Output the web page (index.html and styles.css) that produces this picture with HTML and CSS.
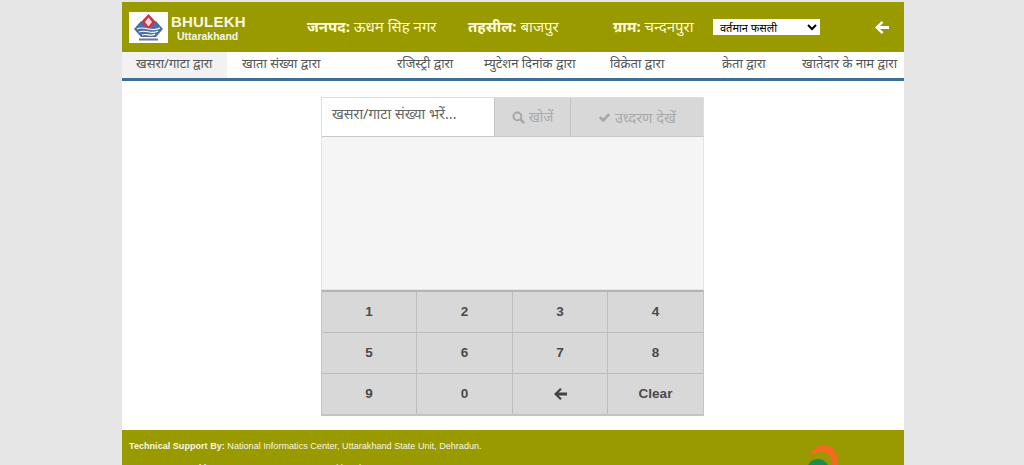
FILE: index.html
```html
<!DOCTYPE html>
<html lang="hi">
<head>
<meta charset="utf-8">
<title>Bhulekh Uttarakhand</title>
<link rel="stylesheet" href="styles.css">
</head>
<body>
<div class="page">
  <header class="header">
    <div class="logo-box">
      <svg class="logo-svg" viewBox="0 0 39 31" aria-hidden="true">
        <path d="M5 17 12 9 19.500 18 27 9 34 17 27 25H12Z" fill="#4a6fa8"/>
        <path d="M19.500 2 27 10 19.500 18 12 10Z" fill="#c8344a"/>
        <path d="M19.500 5.500 23 10 19.500 14.500 16 10Z" fill="#eed9dc"/>
        <path d="M8 17C15 13 22 21 31 16M10 20C16 17 23 23 29 19M13 23C18 21 22 25 26 22" fill="none" stroke="#fff" stroke-width="1.200"/>
        <rect x="10" y="26.500" width="19" height="2" fill="#777"/>
      </svg>
    </div>
    <div class="brand">
      <div class="brand-title">BHULEKH</div>
      <div class="brand-sub">Uttarakhand</div>
    </div>
    <div class="loc loc-district"><b>जनपद:</b> ऊधम सिह नगर</div>
    <div class="loc loc-tehsil"><b>तहसील:</b> बाजपुर</div>
    <div class="loc loc-village"><b>ग्राम:</b> चन्दनपुरा</div>
    <select class="season"><option>वर्तमान फसली</option></select>
    <svg class="back-icon" viewBox="0 0 14 14" aria-hidden="true"><path d="M7.200 1 8.800 2.600 5.600 5.600H14V8.400H5.600L8.800 11.400 7.200 13 1 7Z" fill="#fff"/></svg>
  </header>

  <nav class="tabs">
    <div class="tab tab-active">खसरा/गाटा द्वारा</div>
    <div class="tab tab-2">खाता संख्या द्वारा</div>
    <div class="tab tab-3">रजिस्ट्री द्वारा</div>
    <div class="tab tab-4">म्युटेशन दिनांक द्वारा</div>
    <div class="tab tab-5">विक्रेता द्वारा</div>
    <div class="tab tab-6">क्रेता द्वारा</div>
    <div class="tab tab-7">खातेदार के नाम द्वारा</div>
  </nav>

  <main class="content">
    <section class="panel">
      <div class="search-row">
        <div class="search-input">खसरा/गाटा संख्या भरें...</div>
        <div class="action action-search">
          <svg class="action-icon" viewBox="0 0 14 14" aria-hidden="true"><circle cx="5.800" cy="5.800" r="4.200" fill="none" stroke="#a8a8a8" stroke-width="2.200"/><path d="M8.800 8.800 13 13" stroke="#a8a8a8" stroke-width="2.600"/></svg>
          खोजें
        </div>
        <div class="action action-view">
          <svg class="action-icon" viewBox="0 0 14 14" aria-hidden="true"><path d="M1 7.500 3 5.500 5.500 8 11 2.500 13 4.500 5.500 12Z" fill="#a8a8a8"/></svg>
          उध्दरण देखें
        </div>
      </div>
      <div class="display"></div>
      <div class="keypad">
        <div class="key">1</div><div class="key">2</div><div class="key">3</div><div class="key">4</div>
        <div class="key">5</div><div class="key">6</div><div class="key">7</div><div class="key">8</div>
        <div class="key">9</div><div class="key">0</div>
        <div class="key"><svg class="key-icon" viewBox="0 0 14 14" aria-hidden="true"><path d="M7.200 1 8.800 2.600 5.600 5.600H14V8.400H5.600L8.800 11.400 7.200 13 1 7Z" fill="#444"/></svg></div>
        <div class="key">Clear</div>
      </div>
    </section>
  </main>

  <footer class="footer">
    <div class="footer-text">
      <p class="footer-line"><b>Technical Support By:</b> National Informatics Center, Uttarakhand State Unit, Dehradun.</p>
      <p class="footer-line"><b>Contents Owned by:</b> Revenue Department, Uttarakhand</p>
    </div>
    <svg class="emblem" viewBox="0 0 34 34" aria-hidden="true">
      <path d="M5 12C7 4 13 0 19 0 28 0 33 8 33 20H27C27 11 22 7 17 7 12 7 8 9 5 12Z" fill="#f26b21"/>
      <circle cx="13" cy="25" r="11" fill="#1f8a4c"/>
    </svg>
  </footer>
</div>
</body>
</html>
```
FILE: styles.css
```css
* { box-sizing: border-box; }
html, body { margin: 0; height: 465px; overflow: hidden; }
body { background: #e6e6e6; font-family: "Noto Sans", "Liberation Sans", sans-serif; color: #555; }
.page { width: 782px; margin: 2px 0 0 122px; background: #fff; }

.header { height: 50px; background: #999900; display: flex; align-items: center; color: #fffbd0; }
.logo-box { width: 39px; height: 31px; margin-left: 7px; background: #fff; display: flex; }
.logo-svg { width: 39px; height: 31px; }
.brand { width: 130px; margin-left: 3px; font-family: "Liberation Sans", sans-serif; font-weight: 700; color: #f6f6e6; }
.brand-title { font-size: 15px; line-height: 17px; letter-spacing: 0.2px; }
.brand-sub { font-size: 10.500px; line-height: 12px; margin-left: 6px; }
.loc { font-size: 15px; white-space: nowrap; margin-top: -2px; }
.loc b { font-weight: 700; }
.loc-district { width: 161px; margin-left: 6px; }
.loc-tehsil { width: 145px; }
.loc-village { width: 100px; }
.season { width: 107px; height: 16px; font-size: 11px; padding: 0 0 0 3px; border: 0; border-radius: 0; background-color: #fff; color: #000; font-family: "Noto Sans", sans-serif; }
.back-icon { width: 15px; height: 15px; margin-left: 54px; }

.tabs { height: 29px; border-bottom: 3px solid #3a7099; display: flex; font-size: 13px; color: #555; background: #fff; }
.tab { flex: none; padding: 0 14px; line-height: 23px; white-space: nowrap; }
.tab-active { width: 105px; background: #f2f2f2; }
.tab-2 { margin-left: 1px; width: 155px; }
.tab-3 { width: 87px; }
.tab-4 { width: 126px; }
.tab-5 { width: 112px; }
.tab-6 { width: 78px; }
.tab-7 { margin-left: 2px; }

.content { height: 349px; padding: 16px 0 0 199px; background: #fff; }
.panel { width: 383px; }
.search-row { height: 40px; display: flex; border: 1px solid #dedede; border-bottom-color: #c8c8c8; }
.search-input { width: 172px; padding-left: 10px; line-height: 32px; font-size: 14.400px; color: #666; background: #fff; }
.action { background: #d8d8d8; color: #aaa; display: flex; align-items: center; justify-content: center; gap: 4px; border-left: 1px solid #c4c4c4; }
.action-search { width: 76px; font-size: 13.500px; }
.action-view { flex: 1; font-size: 14.500px; }
.action-icon { width: 13px; height: 13px; }
.display { height: 153px; background: #f5f5f5; border: 1px solid #e4e4e4; border-top: 0; }
.keypad { display: grid; grid-template-columns: 94px 96px 95px 1fr; grid-template-rows: 40px 41px 41px; border: 1px solid #c4c4c4; border-top: 2px solid #b5b5b5; border-bottom-width: 2px; background: #d8d8d8; height: 126px; }
.key { display: flex; align-items: center; justify-content: center; padding-bottom: 1px; border-left: 1px solid #bdbdbd; border-top: 1px solid #bdbdbd; font-family: "Liberation Sans", sans-serif; font-weight: 700; font-size: 13.500px; color: #4a4a4a; }
.key:nth-child(4n+1) { border-left: 0; }
.key:nth-child(-n+4) { border-top: 0; }
.key-icon { width: 14px; height: 14px; }

.footer { height: 60px; background: #999900; display: flex; font-family: "Liberation Sans", sans-serif; font-size: 9.100px; color: #f8f8e0; overflow: hidden; }
.footer-text { width: 676px; padding: 11px 0 0 7px; }
.footer-line { margin: 0 0 11px; line-height: 11px; }
.emblem { width: 34px; height: 34px; margin: 15px 0 0 7px; }
```
